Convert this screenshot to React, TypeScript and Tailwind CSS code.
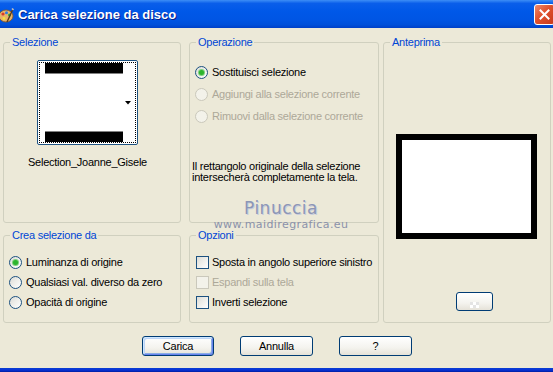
import React from "react";

function Radio({ checked = false, disabled = false }: { checked?: boolean; disabled?: boolean }) {
  return (
    <span
      className={
        disabled
          ? "w-[13px] h-[13px] rounded-full border border-[#CAC8BB] bg-[#F3F2EA] shrink-0 flex items-center justify-center"
          : "w-[13px] h-[13px] rounded-full border border-[#1C5180] bg-[linear-gradient(135deg,#DCDCD7_0%,#EDEDE9_45%,#FFFFFF_100%)] shrink-0 flex items-center justify-center"
      }
    >
      {checked && <span className="w-[5px] h-[5px] rounded-full bg-[#2DB52D] shadow-[0_0_0_1px_#7ED07E]" />}
    </span>
  );
}

function Check({ disabled = false }: { disabled?: boolean }) {
  return (
    <span
      className={
        disabled
          ? "w-[13px] h-[13px] border border-[#CAC8BB] bg-[#F3F2EA] shrink-0"
          : "w-[13px] h-[13px] border border-[#1C5180] bg-[linear-gradient(135deg,#DCDCD7_0%,#EDEDE9_45%,#FFFFFF_100%)] shrink-0"
      }
    />
  );
}

function Group({
  title,
  className,
  children,
}: {
  title: string;
  className: string;
  children?: React.ReactNode;
}) {
  return (
    <fieldset className={`border border-[#D0D0BF] rounded-[3px] min-w-0 ${className}`}>
      <legend className="ml-[6px] px-[2px] text-[#0046D5] leading-[13px]">{title}</legend>
      {children}
    </fieldset>
  );
}

function XPButton({ label, def = false, w }: { label: string; def?: boolean; w: string }) {
  return (
    <div
      className={`${w} h-[20px] rounded-[3px] border border-[#003C74] bg-[linear-gradient(to_bottom,#FFFFFF_0%,#F4F3EE_60%,#E5E2D8_100%)] flex items-center justify-center leading-none ${
        def
          ? "shadow-[inset_1px_1px_0_#CEE7FF,inset_-1px_-1px_0_#6982EE,inset_2px_2px_0_#BCD4F6,inset_-2px_-2px_0_#89ADE4]"
          : ""
      }`}
    >
      {label}
    </div>
  );
}

export default function App() {
  return (
    <div className="relative w-[553px] h-[372px] overflow-hidden bg-[#ECE9D8] flex flex-col font-['Liberation_Sans',Arial,sans-serif] text-[11px] tracking-[-0.25px] text-black whitespace-nowrap">
      {/* Title bar */}
      <div className="h-[28px] shrink-0 flex items-center bg-[linear-gradient(to_bottom,#3D8EF6_0%,#0A5EEA_12%,#0058E8_40%,#0055E4_70%,#0050DA_88%,#0040C8_100%)]">
        <svg width="16" height="16" viewBox="0 0 16 16" className="ml-[-2px] mt-[1px] shrink-0">
          <ellipse cx="8" cy="9" rx="7" ry="6" fill="#E9B36A" stroke="#8A5A20" strokeWidth="0.8" />
          <circle cx="5" cy="7" r="1.6" fill="#D93A2A" />
          <circle cx="8.5" cy="5.8" r="1.5" fill="#2E7BE0" />
          <circle cx="11.5" cy="8" r="1.5" fill="#2FAE3A" />
          <circle cx="6" cy="11.5" r="1.4" fill="#F2E33A" />
          <path d="M9 15 L15 2" stroke="#5A3A1A" strokeWidth="1.4" />
          <path d="M14 1.5 L15.5 3" stroke="#C0C0C0" strokeWidth="1.6" />
        </svg>
        <span className="ml-[4px] text-white font-bold text-[13px] tracking-normal leading-none [text-shadow:1px_1px_0_#0A1E8A]">
          Carica selezione da disco
        </span>
        <div className="ml-auto mr-[-2px] w-[21px] h-[21px] mt-[1px] rounded-[3px] border border-white bg-[linear-gradient(135deg,#EE8A6C_0%,#E0512D_45%,#C63A1C_100%)] flex items-center justify-center">
          <svg width="11" height="11" viewBox="0 0 11 11">
            <path d="M1.5 1.5 L9.5 9.5 M9.5 1.5 L1.5 9.5" stroke="#FFFFFF" strokeWidth="2" strokeLinecap="square" />
          </svg>
        </div>
      </div>

      {/* Body */}
      <div className="flex-1 flex flex-col pl-[3px] pt-[8px]">
        <div className="flex h-[287px]">
          {/* Column 1 */}
          <div className="w-[178px] flex flex-col gap-[6px]">
            <Group title="Selezione" className="h-[187px]">
              <div className="flex flex-col items-center pr-[9px] pt-[11px]">
                <div className="w-[101px] h-[85px] border border-[#1C5180] rounded-[2px] bg-white p-[1px]">
                  <div className="h-full border border-dotted border-black flex flex-col pl-[5px]">
                    <div className="w-[78px] h-[11px] bg-black border-b border-[#808080]" />
                    <div className="flex-1 flex items-center justify-end pr-[4px]">
                      <svg width="6" height="4" viewBox="0 0 6 4">
                        <path d="M0 0 H6 L3 3.5 Z" fill="#000" />
                      </svg>
                    </div>
                    <div className="w-[78px] h-[11px] bg-black border-t border-[#808080]" />
                  </div>
                </div>
                <div className="mt-[11px] leading-[13px]">Selection_Joanne_Gisele</div>
              </div>
            </Group>
            <Group title="Crea selezione da" className="h-[94px]">
              <div className="flex flex-col gap-[7px] pl-[5px] pt-[14px]">
                <div className="flex items-center gap-[4px] leading-[13px]">
                  <Radio checked />
                  <span>Luminanza di origine</span>
                </div>
                <div className="flex items-center gap-[4px] leading-[13px]">
                  <Radio />
                  <span>Qualsiasi val. diverso da zero</span>
                </div>
                <div className="flex items-center gap-[4px] leading-[13px]">
                  <Radio />
                  <span>Opacità di origine</span>
                </div>
              </div>
            </Group>
          </div>

          {/* Column 2 */}
          <div className="ml-[8px] w-[190px] flex flex-col gap-[6px]">
            <Group title="Operazione" className="h-[187px]">
              <div className="flex flex-col gap-[9px] pl-[5px] pt-[17px]">
                <div className="flex items-center gap-[4px] leading-[13px]">
                  <Radio checked />
                  <span>Sostituisci selezione</span>
                </div>
                <div className="flex items-center gap-[4px] leading-[13px] text-[#ACA899]">
                  <Radio disabled />
                  <span>Aggiungi alla selezione corrente</span>
                </div>
                <div className="flex items-center gap-[4px] leading-[13px] text-[#ACA899]">
                  <Radio disabled />
                  <span>Rimuovi dalla selezione corrente</span>
                </div>
              </div>
              <p className="pl-[2px] mt-[38px] leading-[11px]">
                Il rettangolo originale della selezione
                <br />
                intersecherà completamente la tela.
              </p>
            </Group>
            <Group title="Opzioni" className="h-[94px]">
              <div className="flex flex-col gap-[7px] pl-[6px] pt-[14px]">
                <div className="flex items-center gap-[3px] leading-[13px]">
                  <Check />
                  <span>Sposta in angolo superiore sinistro</span>
                </div>
                <div className="flex items-center gap-[3px] leading-[13px] text-[#ACA899]">
                  <Check disabled />
                  <span>Espandi sulla tela</span>
                </div>
                <div className="flex items-center gap-[3px] leading-[13px]">
                  <Check />
                  <span>Inverti selezione</span>
                </div>
              </div>
            </Group>
          </div>

          {/* Column 3 */}
          <div className="ml-[4px] w-[168px] flex flex-col">
            <Group title="Anteprima" className="h-[288px]">
              <div className="flex flex-col pl-[12px] pt-[85px]">
                <div className="w-[141px] h-[105px] bg-white border-[6px] border-black" />
                <div className="ml-[60px] mt-[53px] w-[37px] h-[19px] rounded-[3px] border border-[#003C74] bg-[linear-gradient(to_bottom,#FFFFFF_0%,#F4F3EE_60%,#E5E2D8_100%)] flex items-end justify-center pb-[2px]">
                  <div className="grid grid-cols-3 grid-rows-2">
                    <div className="w-[3px] h-[3px] bg-[#E4E4E4]" />
                    <div className="w-[3px] h-[3px] bg-white" />
                    <div className="w-[3px] h-[3px] bg-[#E4E4E4]" />
                    <div className="w-[3px] h-[3px] bg-white" />
                    <div className="w-[3px] h-[3px] bg-[#E4E4E4]" />
                    <div className="w-[3px] h-[3px] bg-white" />
                  </div>
                </div>
              </div>
            </Group>
          </div>
        </div>

        {/* Buttons */}
        <div className="flex mt-[13px] pl-[139px] gap-[26px]">
          <XPButton label="Carica" def w="w-[72px]" />
          <XPButton label="Annulla" w="w-[73px]" />
          <XPButton label="?" w="w-[73px]" />
        </div>
      </div>

      <div className="h-[4px] shrink-0 bg-[linear-gradient(to_bottom,#0B3FD0_0%,#0831D9_50%,#001EA0_100%)]" />

      {/* Watermark overlay */}
      <div className="absolute left-[220px] top-[198px] w-[122px] flex flex-col items-center pointer-events-none">
        <span className="text-[17px] leading-[20px] tracking-[0.5px] text-[#8C96B6] font-['DejaVu_Sans',sans-serif] [text-shadow:1px_1px_0_#C9CEDD]">
          Pinuccia
        </span>
        <span className="mt-[1px] text-[11px] leading-[12px] tracking-[0.4px] text-[#8A91AA] font-['DejaVu_Sans',sans-serif]">
          www.maidiregrafica.eu
        </span>
      </div>
    </div>
  );
}
